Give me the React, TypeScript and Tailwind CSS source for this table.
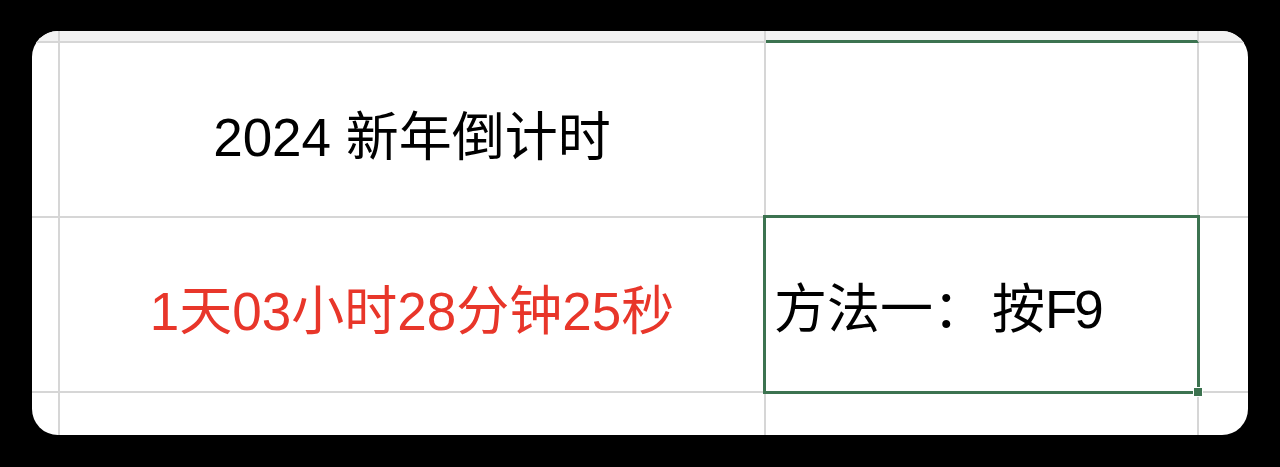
import React from "react";

const font = { fontFamily: '"Liberation Sans", "Noto Sans CJK SC", sans-serif' };

export default function App() {
  return (
    <div className="w-[1280px] h-[467px] bg-black pt-[31px] pl-[32px]" style={font}>
      <div className="relative w-[1216px] h-[404px] rounded-[26px] bg-white overflow-hidden flex flex-col">
        {/* column header strip */}
        <div className="flex h-[12px] bg-[#f2f2f2]">
          <div className="w-[28px] border-r-2 border-b-2 border-[#d6d6d6]" />
          <div className="w-[706px] border-r-2 border-b-2 border-[#d6d6d6]" />
          <div className="w-[433px] border-r-2 border-[#d6d6d6] border-b-[3px] border-b-[#3c7350]" />
          <div className="flex-1 border-b-2 border-[#d6d6d6]" />
        </div>
        {/* row 1 */}
        <div className="flex h-[175px]">
          <div className="w-[28px] border-r-2 border-b-2 border-[#d6d6d6]" />
          <div className="w-[706px] border-r-2 border-b-2 border-[#d6d6d6] flex items-center justify-center pt-[16px]">
            <span className="text-[53px] leading-none text-black whitespace-nowrap">2024 新年倒计时</span>
          </div>
          <div className="w-[433px] border-r-2 border-b-2 border-[#d6d6d6]" />
          <div className="flex-1 border-b-2 border-[#d6d6d6]" />
        </div>
        {/* row 2 */}
        <div className="flex h-[175px]">
          <div className="w-[28px] border-r-2 border-b-2 border-[#d6d6d6]" />
          <div className="w-[706px] border-r-2 border-b-2 border-[#d6d6d6] flex items-center justify-center pt-[14px]">
            <span className="text-[53px] leading-none text-[#e8362a] whitespace-nowrap">1天03小时28分钟25秒</span>
          </div>
          <div className="w-[433px] border-r-2 border-b-2 border-[#d6d6d6] flex items-center pl-[8px] pt-[10px]">
            <span className="text-[53px] leading-none text-black whitespace-nowrap">
              方法一：<span className="ml-[6px]">按</span>
              <span className="tracking-[-3px]">F9</span>
            </span>
          </div>
          <div className="flex-1 border-b-2 border-[#d6d6d6]" />
        </div>
        {/* row 3 */}
        <div className="flex flex-1">
          <div className="w-[28px] border-r-2 border-[#d6d6d6]" />
          <div className="w-[706px] border-r-2 border-[#d6d6d6]" />
          <div className="w-[433px] border-r-2 border-[#d6d6d6]" />
          <div className="flex-1" />
        </div>
        {/* selection overlay */}
        <div className="absolute left-[731px] top-[184px] w-[437px] h-[179px] border-[3px] border-[#3c7350]" />
        <div className="absolute left-[1161px] top-[356px] w-[10px] h-[10px] bg-[#3c7350] border border-white" />
      </div>
    </div>
  );
}
